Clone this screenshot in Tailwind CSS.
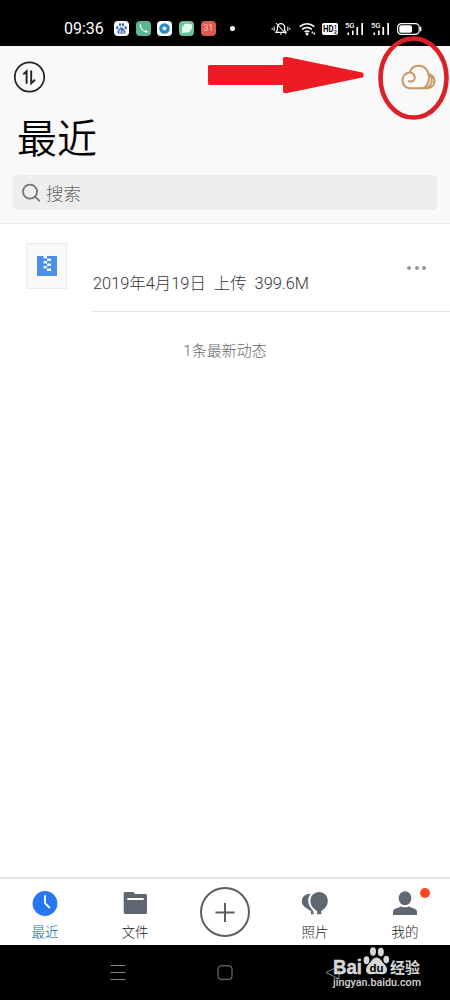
<!DOCTYPE html>
<html lang="zh-CN">
<head>
    <meta charset="UTF-8">
    <meta name="viewport" content="width=device-width, initial-scale=1.0">
    <title>最近</title>
    <script src="https://cdn.jsdelivr.net/npm/@tailwindcss/browser@4"></script>
</head>
<body class="bg-black">
    <div class="relative w-[450px] h-[1000px] overflow-hidden flex flex-col bg-white font-[Roboto,'Noto_Sans_CJK_SC',sans-serif]">

        <!-- Status bar -->
        <div class="h-[46px] shrink-0 bg-black text-white flex items-center justify-between pl-16 pr-7 pt-[11px]">
            <div class="flex items-center">
                <span class="w-[50px] text-base leading-5">09:36</span>
                <div class="flex items-center gap-[6.7px]">
                    <svg class="size-[15px]" viewBox="0 0 15 15">
                        <rect width="15" height="15" rx="4" fill="#fff"/>
                        <g fill="#3e69b5">
                            <ellipse cx="3.3" cy="6.8" rx="1.2" ry="1.7"/>
                            <ellipse cx="6" cy="3.8" rx="1.2" ry="1.7"/>
                            <ellipse cx="9" cy="3.8" rx="1.2" ry="1.7"/>
                            <ellipse cx="11.7" cy="6.8" rx="1.2" ry="1.7"/>
                            <path d="M7.5 6.2C9 6.2 9.4 7.8 10.6 8.9C12.4 10.6 11.6 12.8 9.6 12.6Q7.5 12.2 5.4 12.6C3.4 12.8 2.6 10.6 4.4 8.9C5.6 7.8 6 6.2 7.5 6.2Z"/>
                        </g>
                        <path d="M6.5 8.5v3H5.2v-1.6h1.3M8.2 9.5v2h1.5v-2" fill="none" stroke="#fff" stroke-width=".6"/>
                    </svg>
                    <svg class="size-[15px]" viewBox="0 0 15 15">
                        <rect width="15" height="15" rx="4" fill="#5bb791"/>
                        <path d="M4.6 3.6C3.2 6.2 7.8 11.6 11 10.9" fill="none" stroke="#fff" stroke-width="1.1" stroke-linecap="round"/>
                        <path d="M4.2 4.3l.6 1.2M9.6 9.9l1.4.7" stroke="#fff" stroke-width="1.4" stroke-linecap="round"/>
                    </svg>
                    <svg class="size-[15px]" viewBox="0 0 15 15">
                        <rect width="15" height="15" rx="4" fill="#fff"/>
                        <circle cx="7.5" cy="7.5" r="5.3" fill="#268bcb"/>
                        <circle cx="7.5" cy="7.3" r="1.9" fill="#fff"/>
                    </svg>
                    <svg class="size-[15px]" viewBox="0 0 15 15">
                        <rect width="15" height="15" rx="4" fill="#68c49c"/>
                        <path d="M6 2.8h5.500q1.500 0 1.500 1.500v3q0 1.600-1.600 1.900-.5 2.300-2.400 2.300H5L3 12.500V7q0-1.700 1.600-1.900Q4.600 2.800 6 2.800Z" fill="#e4f7ee"/>
                    </svg>
                    <span class="size-[15px] rounded-[4px] bg-[#e15850] text-[#ffc9be] text-[9px] leading-[15px] text-center">31</span>
                </div>
                <span class="ml-[14px] size-[5px] rounded-full bg-white"></span>
            </div>

            <div class="flex items-center">
                <svg class="w-5 h-4 mr-2" viewBox="0 0 20 16" fill="none" stroke="#fff">
                    <path d="M5 11.3h10L13.6 9V6.2a3.6 3.6 0 0 0-7.2 0V9Z" stroke-width="1.2"/>
                    <path d="M9 13h2M5 2l10 11" stroke-width="1.1"/>
                    <path d="M1.2 6.8v2M3.2 5.5v4.5M16.8 5.5v4.500M18.800 6.800v2" stroke-width="1"/>
                </svg>
                <svg class="w-[17px] h-4 mr-[6px]" viewBox="0 0 17 16" fill="none" stroke="#fff" stroke-width="1.6">
                    <path d="M.8 5.6a10.500 10.500 0 0 1 14.400 0M3.200 8.400a7 7 0 0 1 9.600 0M5.600 11a3.700 3.700 0 0 1 4.800 0"/>
                    <circle cx="8" cy="13" r=".6" fill="#fff"/>
                    <path d="M13.300 10.500v2M15.300 11.500v2.200" stroke-width="1.300"/>
                </svg>
                <svg class="w-4 h-3 mr-[7px]" viewBox="0 0 16 12">
                    <rect width="16" height="12" rx="2" fill="#fff"/>
                    <text x="1" y="9.300" font-family="Roboto" font-size="8.500" font-weight="700" textLength="10.500" lengthAdjust="spacingAndGlyphs">HD</text>
                    <text x="12" y="5.600" font-family="Roboto" font-size="5" font-weight="700">1</text>
                    <text x="12" y="10.600" font-family="Roboto" font-size="5" font-weight="700">2</text>
                </svg>
                <svg class="w-[19px] h-4 mr-[7px]" viewBox="0 0 19 16" fill="#fff">
                    <text x="0" y="6.800" font-family="Roboto" font-size="8" font-weight="500" textLength="9.500" lengthAdjust="spacingAndGlyphs">5G</text>
                    <path d="M2.500 11.500h1.600v2.500H2.500zM7 9.500h1.600V14H7zM11.400 6h1.700v8h-1.700zM16.300 2H18v12h-1.700z"/>
                </svg>
                <svg class="w-[19px] h-4 mr-[7px]" viewBox="0 0 19 16" fill="#fff">
                    <text x="0" y="6.800" font-family="Roboto" font-size="8" font-weight="500" textLength="9.500" lengthAdjust="spacingAndGlyphs">5G</text>
                    <path d="M2.500 11.500h1.600v2.500H2.500zM7 9.500h1.600V14H7zM11.400 6h1.700v8h-1.700zM16.300 2H18v12h-1.700z"/>
                </svg>
                <svg class="w-[25px] h-3" viewBox="0 0 25 12">
                    <rect x=".6" y=".6" width="21.600" height="10.800" rx="3.800" fill="none" stroke="#fff" stroke-width="1.200"/>
                    <rect x="2.300" y="2.300" width="12.700" height="7.400" rx="1.800" fill="#fff"/>
                    <path d="M23.700 4.200v3.600" stroke="#fff" stroke-width="1.300" stroke-linecap="round"/>
                </svg>
            </div>
        </div>

        <!-- Header -->
        <header class="h-[178px] shrink-0 bg-[#f9f9f9] border-b border-[#ebebee] px-[13px] pt-[15px]">
            <div class="flex items-center justify-between h-8">
                <svg class="size-8" viewBox="0 0 32 32" fill="none" stroke="#222">
                    <circle cx="16.5" cy="16" r="14.7" stroke-width="1.7"/>
                    <path d="M10.300 13.400l3.300-3.200v12.500M18.200 9.500v12.800l3.800-3.500" stroke-width="1.900"/>
                </svg>
                <svg class="w-[35px] h-[26px] mr-px" viewBox="0 0 35 26" fill="none" stroke="#c99763" stroke-width="2" stroke-linecap="round">
                    <path d="M7.800 17.300C11.500 18.500 14.300 16 13.800 13C13.200 9.700 10.300 8 7.300 8.800C4 9.600 1.500 12.700 1.500 16.500C1.500 21 4.700 24.200 8.800 24.200H20.500C25.300 24.200 28 19.300 28 13.500C28 7 23.800 1.800 18 1.800C13.500 1.800 9.900 4.600 8.800 8.500"/>
                    <path d="M20.500 24.200H26.200C30.500 24.200 33.500 21 33.500 17.200C33.500 13.400 31 10.700 27.800 10.300M26.500 23.800C30.500 21.500 32 16.500 30 11.800"/>
                </svg>
            </div>
            <h1 class="mt-[17px] ml-1 h-[57px] text-[40px] leading-[60px] font-[350] text-black">最近</h1>
            <div class="mt-[8px] h-[35px] rounded bg-[#eee] flex items-center pl-[9px] gap-1">
                <svg class="size-5" viewBox="0 0 20 20" fill="none" stroke="#777" stroke-width="1.8" stroke-linecap="round">
                    <circle cx="8" cy="8.600" r="7"/>
                    <path d="M13.200 13.800l4 3.800"/>
                </svg>
                <span class="pt-0.5 text-[17.5px] leading-6 font-light text-[#666]">搜索</span>
            </div>
        </header>

        <!-- Recent list -->
        <main class="flex-1">
            <div class="flex h-[88px]">
                <div class="mt-[19px] ml-[26px] w-[41px] h-[46px] flex items-center justify-center border border-[#ebebeb] bg-[#f9f9f9]">
                    <svg class="size-5" viewBox="0 0 20 20">
                        <path d="M0 0h20v20H0z" fill="#4b8fe8"/>
                        <path d="M6.500 0h3.500v2.500H6.500zM10 2.500h4V5h-4zM6.500 5H10v2.500H6.500zM10 7.500h4V10h-4zM6.500 10H10v2.500H6.500zM10 12.500h4V15h-4z" fill="#f1f6ff"/>
                    </svg>
                </div>
                <div class="ml-[26px] flex-1 border-b border-[#e0e0e0] flex justify-between">
                    <p class="mt-12 text-[16.4px] leading-6 font-light text-[#333] whitespace-pre">2019年4月19日  上传  399.6M</p>
                    <div class="mt-[42px] mr-6 flex gap-[3.5px]">
                        <span class="size-1 rounded-full bg-[#999]"></span>
                        <span class="size-1 rounded-full bg-[#999]"></span>
                        <span class="size-1 rounded-full bg-[#999]"></span>
                    </div>
                </div>
            </div>
            <p class="mt-7 text-center text-[15px] leading-[22px] font-light text-[#666]">1条最新动态</p>
        </main>

        <!-- Tab bar -->
        <nav class="h-[68px] shrink-0 border-t-2 border-[#e4e4e4] grid grid-cols-5 bg-white text-[13.5px] leading-5 font-light text-[#222]">
            <div class="flex flex-col items-center pt-[11px] text-[#0c5cbd]">
                <svg class="size-[26px]" viewBox="0 0 26 26">
                    <circle cx="13" cy="13.500" r="12.400" fill="#2678f1"/>
                    <path d="M13 5.200v8l4.800 4.800" fill="none" stroke="#fff" stroke-width="1.800"/>
                </svg>
                <span class="mt-[6px]">最近</span>
            </div>
            <div class="flex flex-col items-center pt-[11px]">
                <svg class="size-[26px]" viewBox="0 0 26 26">
                    <path d="M3 2h8q1 0 1.500 1l.5 1h10.500q1.500 0 1.500 1.500v17.200q0 1.300-1.300 1.300H3q-1.300 0-1.300-1.300V3.300Q1.700 2 3 2Z" fill="#5f6872"/>
                    <path d="M6 9h15" stroke="#fff" stroke-width="1.800" stroke-linecap="round"/>
                </svg>
                <span class="mt-[6px]">文件</span>
            </div>
            <div class="flex flex-col items-center pt-2">
                <svg class="size-[50px]" viewBox="0 0 50 50" fill="none" stroke="#5f5f5f" stroke-width="2">
                    <circle cx="25" cy="25" r="24"/>
                    <path d="M15.500 25.500h19M25 16v19"/>
                </svg>
            </div>
            <div class="flex flex-col items-center pt-[11px]">
                <svg class="w-[28px] h-[26px]" viewBox="0 0 28 26" fill="#5f6872">
                    <path d="M9.800 3.800C3 4 .9 7.500.9 11.700c0 4.500 5.100 6.800 9.300 9.600l-.3 3h2.800l-.4-3.100C9 17.500 7 14 7.200 10.600c.1-2.700 1-5 2.600-6.800Z"/>
                    <path d="M18.200 2c5 0 8.600 3.800 8.600 8.800 0 4.800-2.700 7.500-6.800 10.500l.5 3h-4.600l.5-3c-4.300-3-7-5.700-7-10.500C9.400 5.800 13.200 2 18.200 2Z"/>
                </svg>
                <span class="mt-[6px]">照片</span>
            </div>
            <div class="relative flex flex-col items-center pt-[11px]">
                <svg class="size-[26px]" viewBox="0 0 26 26" fill="#5f6872">
                    <ellipse cx="13" cy="8.200" rx="6.300" ry="7"/>
                    <path d="M1 25v-3.300q0-2.400 2.300-3l5.900-2.200q3.800 1.700 7.600 0l5.900 2.200q2.300.6 2.300 3V25Z"/>
                </svg>
                <span class="mt-[6px]">我的</span>
                <span class="absolute top-[9px] right-[20px] size-[10px] rounded-full bg-[#f9491f]"></span>
            </div>
        </nav>

        <!-- System navigation -->
        <div class="h-[55px] shrink-0 bg-black grid grid-cols-[1fr_18px_1fr] items-center">
            <svg class="w-4 h-4 ml-[110px]" viewBox="0 0 16 16" stroke="#858585" stroke-width="1">
                <path d="M.5 .5h15M.5 7.500h15M.5 14.500h15"/>
            </svg>
            <svg class="w-[18px] h-4" viewBox="0 0 18 16" fill="none" stroke="#858585" stroke-width="1">
                <rect x="2" y=".8" width="14" height="13.500" rx="3"/>
            </svg>
            <svg class="w-4 h-4 ml-[91px]" viewBox="0 0 16 16" fill="none" stroke="#858585" stroke-width="1">
                <path d="M14 1L1 7.500l13 6.500Z"/>
            </svg>
        </div>

        <!-- Watermark -->
        <div class="absolute left-[332px] top-[946px] text-[#ddd]">
            <svg class="block w-[92px] h-[46px]" viewBox="0 0 92 46" fill="#d6d6d6">
                <text x="1" y="28" font-family="Liberation Sans" font-size="21" font-weight="700" stroke="#d6d6d6" stroke-width=".5" textLength="29" lengthAdjust="spacingAndGlyphs">Bai</text>
                <ellipse cx="34.500" cy="14.200" rx="2.900" ry="4"/>
                <ellipse cx="41" cy="5.500" rx="3" ry="4.200"/>
                <ellipse cx="48.800" cy="6" rx="3" ry="4.200"/>
                <ellipse cx="54.300" cy="13.600" rx="2.900" ry="3.800"/>
                <path d="M44.500 11.500c4 0 5 4 7.700 6.400 5 4.400 2.800 10.700-2 10.300q-5.700-.7-11.300 0c-5 .4-7-5.900-2-10.300C39.600 15.500 40.500 11.500 44.500 11.500Z"/>
                <text x="37.500" y="26" font-family="Liberation Sans" font-size="11.500" font-weight="700" fill="#000" textLength="14" lengthAdjust="spacingAndGlyphs">du</text>
                <text x="58" y="27" font-family="Noto Sans CJK SC" font-size="15" font-weight="700" textLength="30" lengthAdjust="spacingAndGlyphs">经验</text>
                <text x="1" y="40" font-family="Roboto" font-size="11" font-weight="500" textLength="88" lengthAdjust="spacingAndGlyphs">jingyan.baidu.com</text>
            </svg>
        </div>

        <!-- Red arrow and ring drawn over the screen -->
        <svg class="absolute left-[200px] top-[30px] w-[250px] h-[95px]" viewBox="0 0 250 95" fill="none">
            <path d="M9.500 36.500H84.500V28.500H87L162 44v2L87 61.500H84.500V53.500H9.500Z" fill="#ed1c24" stroke="#ed1c24" stroke-width="3" stroke-linejoin="round"/>
            <ellipse cx="213.500" cy="48" rx="33" ry="39.500" stroke="#dc2028" stroke-width="4.600"/>
        </svg>
    </div>
</body>
</html>
